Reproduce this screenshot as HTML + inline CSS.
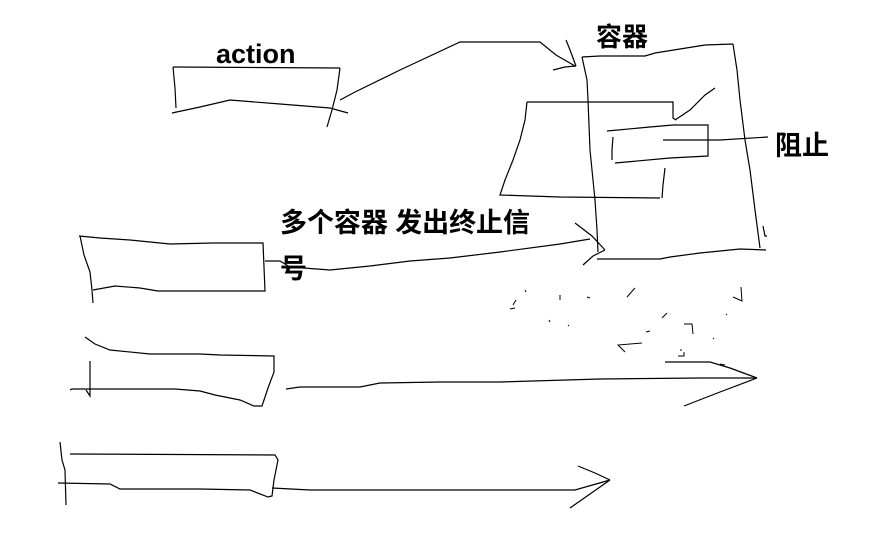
<!DOCTYPE html>
<html><head><meta charset="utf-8"><style>
html,body{margin:0;padding:0;background:#fff;width:876px;height:540px;overflow:hidden}
svg{display:block}
text{font-family:"Liberation Sans","Noto Sans CJK SC",sans-serif;font-weight:bold;fill:#000}
</style></head><body>
<svg width="876" height="540" viewBox="0 0 876 540" fill="none" stroke="#000" stroke-width="1.2">
<text x="216" y="63" font-size="27" stroke="none">action</text>
<text x="596" y="46" font-size="26" stroke="none">容器</text>
<text x="775" y="155" font-size="27" stroke="none">阻止</text>
<text x="280" y="232" font-size="27" stroke="none" textLength="250" lengthAdjust="spacing">多个容器 发出终止信</text>
<text x="280" y="278" font-size="27" stroke="none">号</text>
<!-- action box -->
<polyline points="173,67 340,68"/>
<polyline points="173,67 175,88 176,108"/>
<polyline points="172,113 200,107 230,100 280,104 330,108 348,113"/>
<polyline points="340,68 337,90 332,110 327,127"/>
<polyline points="340,100 355,92 400,70 460,42 540,42 556,55 575,66"/>
<polyline points="553,70 565,67 576,66"/>
<polyline points="566,40 570,50 576,66"/>
<!-- container -->
<polyline points="582,57 600,56 645,56 655,53 705,45 733,44"/>
<polyline points="733,44 737,70 740,100 745,140 750,170 755,210 760,248"/>
<polyline points="763,226 765,236 767,236"/>
<polyline points="597,259 660,259 670,257 700,253 740,249 766,250"/>
<polyline points="582,57 587,80 588,100 590,150 595,200 597,230 598,252"/>
<!-- inner box -->
<polyline points="527,102 673,102 673,118 676,120"/>
<polyline points="527,102 525,120 520,140 513,160 505,180 500,195 560,197 660,198"/>
<polyline points="665,168 663,185 662,198"/>
<polyline points="675,120 690,110 705,95 715,88"/>
<!-- small box -->
<polyline points="607,131 650,127 673,125 708,125 708,156 670,158 615,163"/>
<polyline points="613,137 612,150 612,160"/>
<polyline points="663,140 720,140 768,137"/>
<!-- box2 -->
<polyline points="79,236 100,238 130,240 170,244 213,243 263,243 264,267 265,291 158,291 140,288 115,286 93,290"/>
<polyline points="80,236 84,255 90,272 92,290 93,303"/>
<polyline points="265,261 280,261 290,267 330,270 370,266 410,261 450,258 500,252 560,244 590,239"/>
<polyline points="575,223 592,236 605,250"/>
<polyline points="583,265 593,256 605,250"/>
<!-- box3 -->
<polyline points="85,337 95,344 110,350 150,354 200,354 220,355 274,356 274,372 268,388 262,406 254,406 240,400 215,395 200,391 175,389 120,389 72,389 70,390"/>
<polyline points="90,361 90,396 86,390"/>
<polyline points="286,389 300,387 360,387 380,383 440,382 500,382 600,379 700,378 757,378"/>
<polyline points="665,362 710,362 730,368 757,378"/>
<polyline points="684,406 720,392 757,378"/>
<!-- box4 -->
<polyline points="70,454 275,455 278,460 274,480 272,496 268,497 250,490 200,489 120,489 110,484 58,483"/>
<polyline points="60,442 62,460 65,470 66,505"/>
<polyline points="272,488 310,490 420,490 510,490 575,490 610,480"/>
<polyline points="578,466 595,473 610,480"/>
<polyline points="570,508 590,494 610,480"/>
<!-- dust -->
<g stroke-width="1">
<polyline points="513,305 516,300"/><polyline points="510,309 515,308"/>
<polyline points="525,290 526,292"/><polyline points="560,295 560,300"/>
<polyline points="587,297 590,298"/><polyline points="627,297 635,288"/>
<polyline points="549,320 550,322"/><polyline points="568,325 569,326"/>
<polyline points="662,318 667,313"/><polyline points="646,332 650,331"/>
<polyline points="684,324 692,324 693,334"/><polyline points="642,343 618,345 625,352"/>
<polyline points="680,350 682,350"/><polyline points="678,356 684,356 684,352"/>
<polyline points="733,297 742,301 741,287"/><polyline points="726,315 727,314"/>
<polyline points="713,339 714,338"/><polyline points="720,364 725,365"/>
</g>
</svg>
</body></html>
